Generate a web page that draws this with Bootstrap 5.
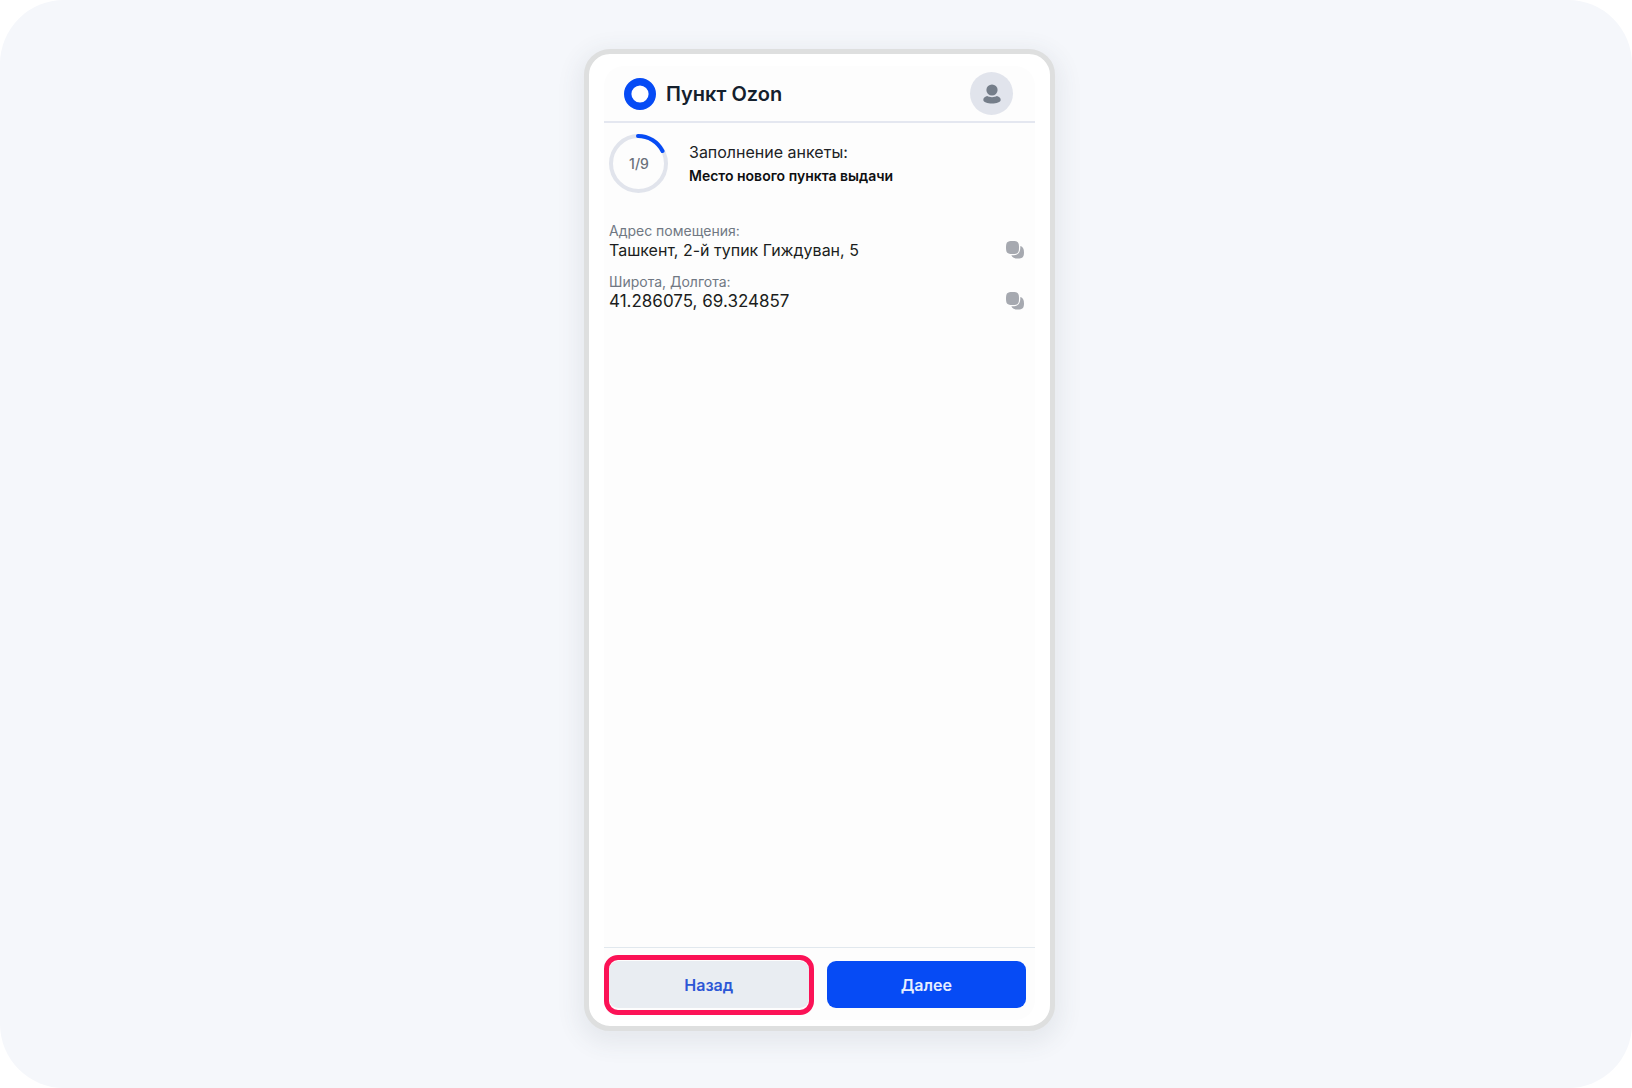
<!DOCTYPE html>
<html lang="ru">
<head>
<meta charset="utf-8">
<meta name="viewport" content="width=device-width, initial-scale=1">
<title>Пункт Ozon</title>
<link href="https://cdn.jsdelivr.net/npm/bootstrap@5.3.0/dist/css/bootstrap.min.css" rel="stylesheet">
<style>
body { font-family: Inter, "Liberation Sans", sans-serif; background: #fff; color: #1b1d20; }
.stage { background: #f5f7fb; border-radius: 64px; padding: 49px 0 57px 7px; }
.phone { width: 471px; max-width: 100%; min-height: calc(100vh - 106px); padding: 12px 15px 6px; background: #fff; border: 5px solid #dedfdf; border-radius: 26px; box-shadow: 0 7px 22px 7px rgba(70, 75, 90, .08); }
.app { background: #fdfdfd; border-radius: 20px; }
.app-header { padding: 6px 22px 6px 20px; border-bottom: 2px solid #e4e7f0; }
.brand { font-size: 20px; line-height: 28px; font-weight: 600; color: #14202d; gap: 10px; }
.brand:hover { color: #14202d; }
.avatar { width: 43px; height: 43px; background: #e1e4ec; }
.ring { width: 60px; height: 60px; }
.step { padding: 11px 5px 0; gap: 20px; }
.step-count { font-size: 14px; line-height: 20px; font-weight: 500; color: #6a717b; }
.step-title { font-size: 16px; line-height: 24px; color: #202225; }
.step-name { font-size: 14px; line-height: 24px; font-weight: 600; color: #0e0f11; }
.details { padding: 27px 11px 0 5px; gap: 12px; }
.details dt { font-size: 14px; line-height: 20px; font-weight: 400; color: #707883; }
.details dd { font-size: 16px; line-height: 19px; color: #1b1d20; }
.details .coords { font-size: 17px; }
.app-footer { padding: 13px 9px 12px 5px; gap: 18px; border-top: 1px solid #e1e8ee; }
.app-footer .btn { height: 47px; border: 0; border-radius: 9px; font-size: 16px; font-weight: 600; }
.btn-back, .btn-back:hover { background: #e9edf2; color: #2c57d6; }
.btn-next, .btn-next:hover { background: #064bf5; color: #e6eeff; }
.btn-back::after { content: ""; position: absolute; inset: -6px -5px -7px; border: 5px solid #fb1256; border-radius: 14px; }
</style>
<script defer src="https://cdn.jsdelivr.net/npm/bootstrap@5.3.0/dist/js/bootstrap.bundle.min.js"></script>
</head>
<body>
<div class="stage min-vh-100 d-flex justify-content-center">
  <div class="phone d-flex">
    <div class="app d-flex flex-column flex-grow-1">
      <header class="app-header d-flex align-items-center justify-content-between">
        <a href="#" class="brand d-flex align-items-center text-decoration-none">
          <svg width="32" height="32" viewBox="0 0 32 32" aria-hidden="true"><circle cx="16" cy="16" r="12.300" fill="#fff" stroke="#064bf5" stroke-width="7.400"/></svg>
          <span>Пункт Ozon</span>
        </a>
        <button type="button" class="avatar btn p-0 border-0 rounded-circle d-flex align-items-center justify-content-center" aria-label="Профиль">
          <svg width="18" height="20" viewBox="0 0 18 20" fill="#757e8a" aria-hidden="true"><circle cx="9" cy="6" r="5.600"/><path d="M4.200 12.100C6 13.600 12 13.600 13.800 12.100C15.500 12.400 17.700 13.800 17.700 15.800C17.700 18.300 13.500 19.500 9 19.500S.3 18.300.3 15.800C.3 13.800 2.500 12.400 4.200 12.100Z"/></svg>
        </button>
      </header>
      <main class="flex-grow-1">
        <section class="step d-flex align-items-center">
          <div class="ring position-relative flex-shrink-0">
            <svg class="d-block" width="60" height="60" viewBox="0 0 60 60" fill="none" stroke-width="4" aria-hidden="true"><circle cx="29.500" cy="29.500" r="27.500" stroke="#e1e4ec"/><path d="M29 2A27.500 27.500 0 0 1 53.500 17" stroke="#064bf5" stroke-linecap="round"/></svg>
            <span class="step-count position-absolute top-50 start-50 translate-middle">1/9</span>
          </div>
          <div>
            <div class="step-title">Заполнение анкеты:</div>
            <div class="step-name">Место нового пункта выдачи</div>
          </div>
        </section>
        <dl class="details d-flex flex-column mb-0">
          <div class="d-flex align-items-end justify-content-between">
            <div><dt>Адрес помещения:</dt><dd class="mb-0">Ташкент, 2-й тупик Гиждуван, 5</dd></div>
            <button type="button" class="btn p-0 border-0 d-flex" aria-label="Копировать адрес">
              <svg width="18" height="20" viewBox="0 0 18 20" fill="#a6a9b0" aria-hidden="true"><path d="M6.500 1C11.800 1 13 2.200 13 7.500S11.800 14 6.500 14 0 12.800 0 7.500 1.200 1 6.500 1Z"/><path d="M14.300 6C17 6.800 18 9 18 12.500C18 17 16.500 18.500 12 18.500C8.500 18.500 6.300 17.700 5.300 15.200C11.500 15.500 14.600 13.500 14.300 6Z"/></svg>
            </button>
          </div>
          <div class="d-flex align-items-end justify-content-between">
            <div><dt>Широта, Долгота:</dt><dd class="coords mb-0">41.286075, 69.324857</dd></div>
            <button type="button" class="btn p-0 border-0 d-flex" aria-label="Копировать координаты">
              <svg width="18" height="20" viewBox="0 0 18 20" fill="#a6a9b0" aria-hidden="true"><path d="M6.500 1C11.800 1 13 2.200 13 7.500S11.800 14 6.500 14 0 12.800 0 7.500 1.200 1 6.500 1Z"/><path d="M14.300 6C17 6.800 18 9 18 12.500C18 17 16.500 18.500 12 18.500C8.500 18.500 6.300 17.700 5.300 15.200C11.500 15.500 14.600 13.500 14.300 6Z"/></svg>
            </button>
          </div>
        </dl>
      </main>
      <footer class="app-footer d-flex">
        <button type="button" class="btn btn-back position-relative flex-fill w-50">Назад</button>
        <button type="button" class="btn btn-next flex-fill w-50">Далее</button>
      </footer>
    </div>
  </div>
</div>
</body>
</html>
